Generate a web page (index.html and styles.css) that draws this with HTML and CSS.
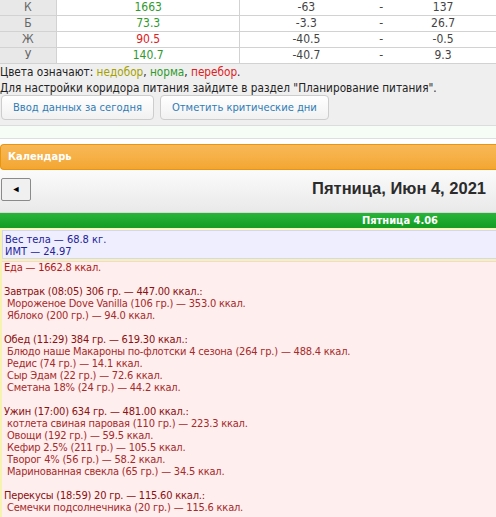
FILE: index.html
```
<!DOCTYPE html>
<html lang="ru">
<head>
<meta charset="utf-8">
<link rel="stylesheet" href="styles.css">
</head>
<body>
<div class="top">
  <table class="norms">
    <tr><td class="lbl">К</td><td class="val ok">1663</td><td class="num">-63</td><td class="dash">-</td><td class="num">137</td></tr>
    <tr><td class="lbl">Б</td><td class="val ok">73.3</td><td class="num">-3.3</td><td class="dash">-</td><td class="num">26.7</td></tr>
    <tr><td class="lbl">Ж</td><td class="val over">90.5</td><td class="num">-40.5</td><td class="dash">-</td><td class="num">-0.5</td></tr>
    <tr><td class="lbl">У</td><td class="val ok">140.7</td><td class="num">-40.7</td><td class="dash">-</td><td class="num">9.3</td></tr>
  </table>
  <div class="legend">Цвета означают: <span class="under">недобор</span>, <span class="ok">норма</span>, <span class="over">перебор</span>.</div>
  <div class="legend">Для настройки коридора питания зайдите в раздел "Планирование питания".</div>
  <div class="btns">
    <button class="btn">Ввод данных за сегодня</button>
    <button class="btn">Отметить критические дни</button>
  </div>
</div>
<div class="mint"></div>
<div class="cal">
  <div class="cal-head">Календарь</div>
  <div class="cal-nav">
    <button class="prev">◄</button>
    <div class="date">Пятница, Июн 4, 2021</div>
  </div>
  <div class="dayhead">Пятница 4.06</div>
  <div class="daybody">
    <div class="weight">Вес тела — 68.8 кг.<br>ИМТ — 24.97</div>
    <div class="food">
      <div class="total">Еда — 1662.8 ккал.</div>
      <div class="meal">
        <div class="mh">Завтрак (08:05) 306 гр. — 447.00 ккал.:</div>
        <div class="it">Мороженое Dove Vanilla (106 гр.) — 353.0 ккал.</div>
        <div class="it">Яблоко (200 гр.) — 94.0 ккал.</div>
      </div>
      <div class="meal">
        <div class="mh">Обед (11:29) 384 гр. — 619.30 ккал.:</div>
        <div class="it">Блюдо наше Макароны по-флотски 4 сезона (264 гр.) — 488.4 ккал.</div>
        <div class="it">Редис (74 гр.) — 14.1 ккал.</div>
        <div class="it">Сыр Эдам (22 гр.) — 72.6 ккал.</div>
        <div class="it">Сметана 18% (24 гр.) — 44.2 ккал.</div>
      </div>
      <div class="meal">
        <div class="mh">Ужин (17:00) 634 гр. — 481.00 ккал.:</div>
        <div class="it">котлета свиная паровая (110 гр.) — 223.3 ккал.</div>
        <div class="it">Овощи (192 гр.) — 59.5 ккал.</div>
        <div class="it">Кефир 2.5% (211 гр.) — 105.5 ккал.</div>
        <div class="it">Творог 4% (56 гр.) — 58.2 ккал.</div>
        <div class="it">Маринованная свекла (65 гр.) — 34.5 ккал.</div>
      </div>
      <div class="meal">
        <div class="mh">Перекусы (18:59) 20 гр. — 115.60 ккал.:</div>
        <div class="it">Семечки подсолнечника (20 гр.) — 115.6 ккал.</div>
      </div>
    </div>
  </div>
</div>
</body>
</html>
```
FILE: styles.css
```
html, body {
  margin: 0;
  padding: 0;
  background: #ffffff;
  font-family: "DejaVu Sans Condensed", "DejaVu Sans", sans-serif;
  font-stretch: condensed;
  overflow: hidden;
}

.top {
  background: #efefef;
  font-size: 12px;
  padding-bottom: 5px;
  border-bottom: 1px solid #dcdcdc;
}

.norms {
  width: 100%;
  border-collapse: collapse;
  font-size: 12px;
}
.norms td {
  height: 15px;
  padding: 0;
  border-bottom: 1px solid #d2d2d2;
  background: #ffffff;
  text-align: center;
  color: #444;
  line-height: 15px;
}
.norms td.lbl {
  width: 56px;
  background: #e8e8e8;
  color: #666;
  border-right: 1px solid #d2d2d2;
}
.norms td.val {
  width: 183px;
  border-right: 1px solid #d2d2d2;
}
.norms td.num { width: 132px; }
.norms td.num:last-child { width: 106px; }
.norms td.dash { width: 18px; }

.ok { color: #2e9a2e !important; }
.under { color: #a5a000; }
.over { color: #e0201c !important; }

.legend {
  font-size: 11.7px;
  line-height: 16px;
  color: #222;
  white-space: nowrap;
}

.btns {
  display: flex;
  gap: 6px;
  padding-left: 1px;
  margin-top: -1px;
}
.btn {
  font-family: inherit;
  font-stretch: condensed;
  font-size: 11.1px;
  color: #2f7cb6;
  background: linear-gradient(#ffffff, #f1f1f1);
  border: 1px solid #cdcdcd;
  border-radius: 4px;
  height: 25px;
  padding: 0 11px;
  margin: 0;
}

.mint {
  height: 12px;
  background: #f6fcf6;
  border-bottom: 1px solid #dedede;
  margin-bottom: 5px;
}

.cal-head {
  height: 24px;
  line-height: 24px;
  background: linear-gradient(#f8b858 0%, #f6b046 50%, #f3a632 100%);
  border: 1px solid #e8950f;
  border-right: none;
  border-radius: 4px 0 0 4px;
  color: #ffffff;
  font-weight: bold;
  font-size: 11px;
  padding-left: 7px;
}

.cal-nav {
  height: 42px;
  display: flex;
  align-items: center;
  justify-content: space-between;
  background: linear-gradient(#fbfbfb, #e9e9e9);
  border-bottom: 1px solid #d8d8d8;
}
.prev {
  margin: -4px 0 0 1px;
  width: 30px;
  height: 23px;
  padding: 0;
  background: #f0f0f0;
  border: 1px solid #8a8a8a;
  border-radius: 2px;
  font-size: 9px;
  color: #000;
  line-height: 20px;
}
.date {
  font-family: "Liberation Sans", Arial, sans-serif;
  font-weight: bold;
  font-size: 16.5px;
  color: #2b2b2b;
  padding-right: 10px;
  margin-top: -6px;
}

.dayhead {
  height: 15px;
  line-height: 15px;
  background: linear-gradient(#28b43a, #149c24);
  color: #ffffff;
  font-weight: bold;
  font-size: 11px;
  text-align: right;
  padding-right: 58px;
  border-bottom: 2px solid #fbfbc0;
}

.daybody {
  background: #f6f2b0;
  padding-left: 2px;
}

.weight {
  background: #eeeefe;
  border: 1px solid #d6d6ee;
  border-right: none;
  color: #22229a;
  font-size: 11px;
  line-height: 12px;
  padding: 3px 2px 0 2px;
  margin-bottom: 2px;
}

.food {
  background: #ffeeee;
  border-top: 1px solid #f0d8d8;
  color: #a52a2a;
  font-size: 11px;
  letter-spacing: -0.2px;
  line-height: 12px;
  padding: 0 2px 20px 2px;
}
.total { color: #b01818; }
.meal { margin-top: 12px; }
.mh { color: #8b1010; }
.it { padding-left: 3px; }
```
